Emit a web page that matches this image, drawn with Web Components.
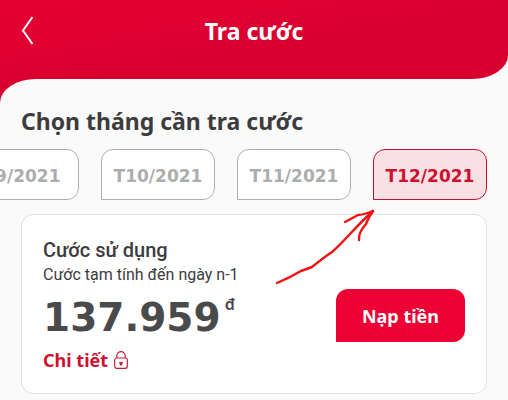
<!DOCTYPE html>
<html lang="vi">
<head>
    <meta charset="UTF-8">
    <meta name="viewport" content="width=device-width, initial-scale=1.0">
    <title>Tra cước</title>
    <style>
        body {
            margin: 0;
            background: #fafafa;
            color: #3c3c3e;
            font-family: "Noto Sans", "Open Sans", sans-serif;
        }
    </style>
</head>
<body>
    <app-header>Tra cước</app-header>
    <app-sheet>
        <span slot="title">Chọn tháng cần tra cước</span>
        <month-list>
            <month-tab>T9/2021</month-tab>
            <month-tab>T10/2021</month-tab>
            <month-tab>T11/2021</month-tab>
            <month-tab selected>T12/2021</month-tab>
        </month-list>
        <charge-card>
            <span slot="name">Cước sử dụng</span>
            <span slot="note">Cước tạm tính đến ngày n-1</span>
            <span slot="amount">137.959</span>
            <span slot="unit">đ</span>
            <span slot="detail">Chi tiết</span>
            <pay-button slot="action">Nạp tiền</pay-button>
            <hand-arrow slot="mark"></hand-arrow>
        </charge-card>
    </app-sheet>

    <template id="header-tpl">
        <style>
            :host { display: block; background: #fafafa; }
            header {
                display: grid;
                grid-template-columns: 40px 1fr 40px;
                align-items: start;
                height: 64px;
                padding: 15px 8px 0;
                background: linear-gradient(170deg, #e60032, #d8002f 60%);
                border-bottom-right-radius: 36px 24px;
            }
            button { height: 32px; padding: 0; border: 0; background: none; }
            svg { display: block; margin-left: 13px; }
            h1 { margin: 0; font-size: 23px; line-height: 32px; color: #fff; text-align: center; }
        </style>
        <header>
            <button type="button" aria-label="Quay lại">
                <svg width="14" height="32" viewBox="0 0 14 32" fill="none" stroke="#fff" stroke-width="2">
                    <path d="M11.500 2L2 15.500L11.500 29"/>
                </svg>
            </button>
            <h1><slot></slot></h1>
        </header>
    </template>

    <template id="sheet-tpl">
        <style>
            /* red patch shows behind the rounded corner */
            :host {
                display: block;
                background: linear-gradient(#d8002f, #d8002f) no-repeat 0 0 / 36px 24px;
            }
            main {
                padding: 24px 0 6px;
                background: #fafafa;
                border-top-left-radius: 36px 24px;
            }
            h2 { margin: 0 21px 10px; font-size: 23px; line-height: 36px; }
        </style>
        <main>
            <h2><slot name="title"></slot></h2>
            <slot></slot>
        </main>
    </template>

    <template id="list-tpl">
        <style>
            :host {
                display: flex;
                justify-content: flex-end;
                gap: 22px;
                padding: 0 21px;
                overflow: hidden;
            }
        </style>
        <slot></slot>
    </template>

    <template id="tab-tpl">
        <style>
            :host { display: block; flex: 0 0 114px; }
            button {
                width: 100%;
                height: 51px;
                padding: 2px 0 0;
                border: 1px solid #adadad;
                border-radius: 12px 12px 12px 0;
                background: #fff;
                color: #adadad;
                font: bold 17px "DejaVu Sans", sans-serif;
            }
            :host([selected]) button { border-color: #c8102e; background: #f9e0e5; color: #d0102f; }
        </style>
        <button type="button"><slot></slot></button>
    </template>

    <template id="card-tpl">
        <style>
            :host {
                display: flex;
                align-items: flex-end;
                justify-content: space-between;
                position: relative;
                margin: 14px 21px 0;
                padding: 21px;
                border: 1px solid #e2e2e2;
                border-radius: 12px;
                background: #fff;
            }
            .name { font: 500 20px/28px Roboto, sans-serif; }
            .note { font: 16px/22px Roboto, sans-serif; }
            .amount {
                display: flex;
                align-items: flex-start;
                gap: 4px;
                margin-top: 8px;
                font: bold 39px/48px "DejaVu Sans", sans-serif;
                color: #4a4a4c;
            }
            .unit { font: 600 16px/20px "Noto Sans", sans-serif; }
            a {
                display: flex;
                align-items: center;
                gap: 6px;
                margin-top: 6px;
                font-size: 18px;
                line-height: 24px;
                font-weight: bold;
                color: #d0102f;
                text-decoration: none;
            }
            .action { padding-bottom: 30px; }
        </style>
        <div>
            <div class="name"><slot name="name"></slot></div>
            <div class="note"><slot name="note"></slot></div>
            <div class="amount"><slot name="amount"></slot><span class="unit"><slot name="unit"></slot></span></div>
            <a href="#">
                <slot name="detail"></slot>
                <svg width="14" height="18" viewBox="0 0 14 18" fill="none" stroke="#c8203a" stroke-width="1.200">
                    <rect x="0.700" y="7" width="12.600" height="10.300" rx="2"/>
                    <path d="M2.800 7V4.800a4.200 4.200 0 0 1 8.400 0V7"/>
                    <path d="M5 11h4l-1.200 3.500h-1.600z" fill="#c8203a" stroke="none"/>
                </svg>
            </a>
        </div>
        <div class="action"><slot name="action"></slot></div>
        <slot name="mark"></slot>
    </template>

    <template id="pay-tpl">
        <style>
            :host { display: block; }
            button {
                display: block;
                width: 129px;
                height: 53px;
                padding: 0;
                border: 0;
                border-radius: 12px 12px 12px 0;
                background: #ed0034;
                color: #fff;
                font: bold 18px "Noto Sans", sans-serif;
            }
        </style>
        <button type="button"><slot></slot></button>
    </template>

    <template id="arrow-tpl">
        <style>
            /* drawn over the card, points up at the selected month */
            :host { position: absolute; top: -9px; right: 108px; pointer-events: none; }
            svg { display: block; }
        </style>
        <svg width="104" height="80" viewBox="0 0 104 80" fill="none" stroke="#ee1212" stroke-width="2.400" stroke-linecap="round" stroke-linejoin="round">
            <path d="M3 77Q15 72 27 65L38 61Q49 52 58 46C70 36 82 20 99 5"/>
            <path d="M71 16L84 9Q89 9 99 5"/>
            <path d="M85 34Q84 27 92 18Q94 12 99 5"/>
        </svg>
    </template>

    <script>
        // every element only stamps its own template
        function define(name, id) {
            customElements.define(name, class extends HTMLElement {
                connectedCallback() {
                    if (this.shadowRoot) return
                    this.attachShadow({ mode: 'open' })
                    this.shadowRoot.append(document.getElementById(id).content.cloneNode(true))
                }
            })
        }

        define('app-header', 'header-tpl')
        define('app-sheet', 'sheet-tpl')
        define('month-list', 'list-tpl')
        define('month-tab', 'tab-tpl')
        define('charge-card', 'card-tpl')
        define('pay-button', 'pay-tpl')
        define('hand-arrow', 'arrow-tpl')
    </script>
</body>
</html>
